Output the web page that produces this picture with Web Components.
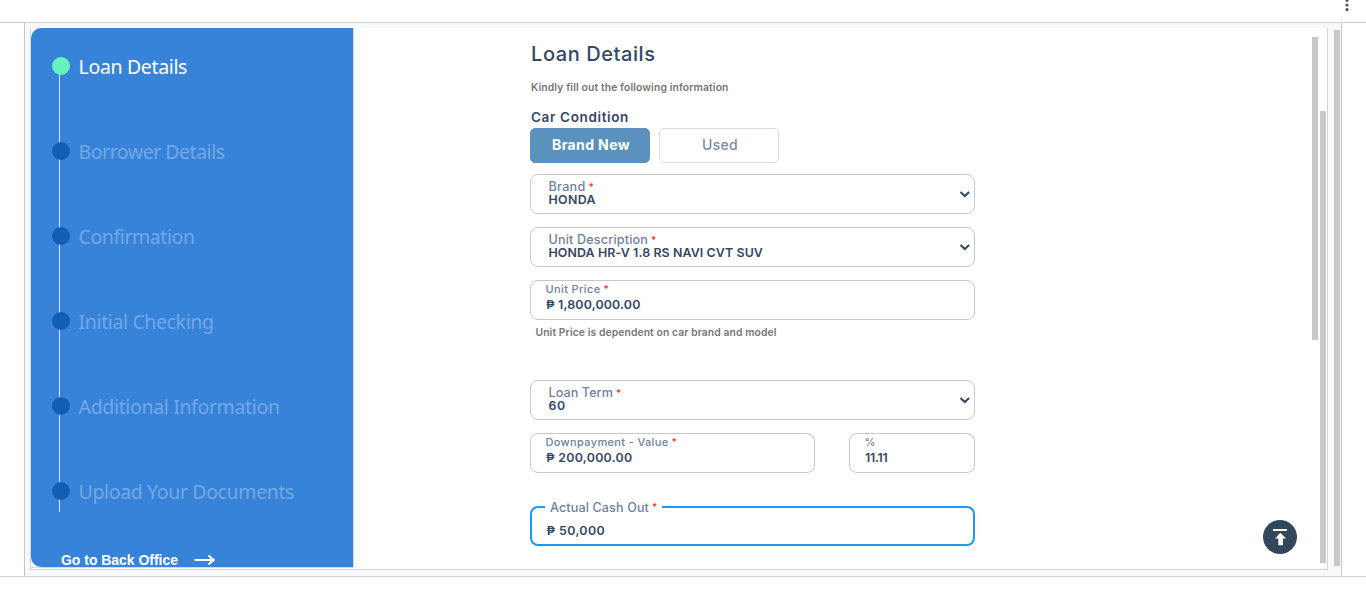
<!DOCTYPE html>
<html lang="en">
<head>
<meta charset="utf-8">
<title>Loan Details</title>
<style>
html,body{margin:0;height:589px;overflow:hidden;background:#fff}
body{font-family:Inter,"Liberation Sans",sans-serif;color:#344767}
</style>
</head>
<body>
<loan-app></loan-app>
<script>
const define = (name, html, setup) => {
  const t = document.createElement('template');
  t.innerHTML = html;
  customElements.define(name, class extends HTMLElement {
    connectedCallback() {
      if (this.shadowRoot) return;
      const root = this.attachShadow({mode: 'open'});
      root.append(t.content.cloneNode(true));
      if (setup) setup(this, root);
    }
  });
};

// One line of text tracked to a given advance width.
define('tracked-text', `
<style>
:host{display:block;flex:none;white-space:nowrap}
span{display:inline-block;line-height:inherit;vertical-align:top}
</style><span><slot></slot></span>`, (el, root) => {
  const s = root.querySelector('span');
  const target = +el.getAttribute('w');
  const n = el.textContent.length;
  const natural = s.getBoundingClientRect().width;
  if (target && n) s.style.letterSpacing = ((target - natural) / n).toFixed(3) + 'px';
});

define('progress-step', `
<style>
:host{display:flex;height:85px;position:relative;color:#73a7e5;font:19.5px/28px "Noto Sans","Open Sans",sans-serif}
i{flex:none;width:18px;height:18px;border-radius:50%;background:#135eb5;margin-right:8px;z-index:1}
:host([active]){color:#fff}
:host([active]) i{background:#66f2be}
:host::before{content:"";position:absolute;left:7px;top:9px;width:1px;height:85px;background:#dbe8f8}
:host([last])::before{height:21px}
tracked-text{margin:-4px 0 0 .6px}
</style><i></i><tracked-text></tracked-text>`, (el, root) => {
  const t = root.querySelector('tracked-text');
  const n = document.createElement('tracked-text');
  n.setAttribute('w', el.getAttribute('w'));
  n.textContent = el.getAttribute('label');
  t.replaceWith(n);
});

define('side-panel', `
<style>
:host{display:flex;flex-direction:column;box-sizing:border-box;flex:none;width:322px;height:539px;background:#3883da;border-radius:10px 0 0 10px;padding:29px 0 0 21px;overflow:hidden}
nav{height:493px;flex:none}
.back{display:flex;align-items:center;height:20px;padding-left:9px;color:#fff;font:bold 14px/20px "Liberation Sans",sans-serif}
svg{margin-left:15.5px}
</style>
<nav>
<progress-step active label="Loan Details" w="108.5"></progress-step>
<progress-step label="Borrower Details" w="146"></progress-step>
<progress-step label="Confirmation" w="116"></progress-step>
<progress-step label="Initial Checking" w="135"></progress-step>
<progress-step label="Additional Information" w="201"></progress-step>
<progress-step last label="Upload Your Documents" w="215.5"></progress-step>
</nav>
<div class="back"><tracked-text w="117">Go to Back Office</tracked-text>
<svg width="21" height="12" viewBox="0 0 21 12" fill="none" stroke="#fff" stroke-width="2.2"><path d="M.5 6H19M14.5 1.5L19.5 6l-5 4.5"/></svg></div>`);

define('choice-button', `
<style>
:host{display:flex;justify-content:center;box-sizing:border-box;width:120px;height:35px;padding:7px 0 0 2px;border:1px solid #dcdcdc;border-radius:5px;font-size:14px;line-height:18px;font-weight:500;color:#7b8ba5}
:host([selected]){background:#5a92bd;border-color:#5a92bd;color:#fff;font-weight:700}
</style><slot></slot>`);

define('form-field', `
<style>
:host{display:flex;position:relative;box-sizing:border-box;width:445px;height:40px;border:1px solid #c8c8c8;border-radius:8px;background:#fff}
.text{display:flex;flex-direction:column}
.label{display:flex;color:#6f819d;font-size:11px;line-height:12px;font-weight:550;margin:2px 0 0 14.5px}
.value{font-size:12.4px;line-height:14px;font-weight:600;margin:3px 0 0 15px;color:#344767}
b{color:#f44336;font-weight:700;font-size:9.5px;line-height:11px;margin-left:3px}
svg{display:none;margin:16px 4px 0 auto}
:host([kind=select]) .label{font-size:12.6px;margin:6px 0 0 17.5px}
:host([kind=select]) .value{margin:0 0 0 17.5px}
:host([kind=select]) svg{display:block}
:host([kind=active]){border:2px solid #2196f3}
:host([kind=active]) .label{font-size:12.6px;margin:-7px 0 0 13px;padding:0 5px;background:#fff;line-height:13px}
:host([kind=active]) .value{margin:10px 0 0 14.5px}
:host([optional]) b{display:none}
</style>
<div class="text"><div class="label"><slot name="label"></slot><b>*</b></div><div class="value"><slot></slot></div></div>
<svg width="11" height="8" viewBox="0 0 11 8" fill="none" stroke="#34496b" stroke-width="2.1"><path d="M1.5 1.1l4.3 4L10.1 1.1"/></svg>`);

define('loan-form', `
<style>
:host{display:block;width:445px;padding:12px 0 0 176px}
h1{margin:0 0 0 1px;font-size:20px;line-height:28px;font-weight:500;height:40px}
p{margin:0 0 0 1px;color:#767676;font-size:10.3px;line-height:14px;font-weight:600}
.sub{height:27px}
h2{margin:0 0 0 1px;font-size:13.5px;line-height:20px;font-weight:600;height:21px}
.choices,.pair{display:flex;gap:9px}
.pair{gap:34px}
.pair form-field:first-child{width:285px}
.pair form-field:last-child{width:126px}
form-field{margin-bottom:13px}
.help{height:47px;padding-left:4.5px;margin-top:-8px;padding-top:0}
.choices{margin-bottom:11px}
</style>
<h1><tracked-text w="124.5">Loan Details</tracked-text></h1>
<p class="sub"><tracked-text w="197.5">Kindly fill out the following information</tracked-text></p>
<h2><tracked-text w="98">Car Condition</tracked-text></h2>
<div class="choices"><choice-button selected><tracked-text w="78">Brand New</tracked-text></choice-button><choice-button><tracked-text w="36">Used</tracked-text></choice-button></div>
<form-field kind="select"><tracked-text slot="label" w="37">Brand</tracked-text><tracked-text w="47.5">HONDA</tracked-text></form-field>
<form-field kind="select"><tracked-text slot="label" w="99.5">Unit Description</tracked-text><tracked-text w="214.5">HONDA HR-V 1.8 RS NAVI CVT SUV</tracked-text></form-field>
<form-field><tracked-text slot="label" w="55">Unit Price</tracked-text><tracked-text w="94.5">₱ 1,800,000.00</tracked-text></form-field>
<p class="help"><tracked-text w="241">Unit Price is dependent on car brand and model</tracked-text></p>
<div style="height:8px"></div>
<form-field kind="select"><tracked-text slot="label" w="64.5">Loan Term</tracked-text><tracked-text w="17.5">60</tracked-text></form-field>
<div class="pair"><form-field><tracked-text slot="label" w="123">Downpayment - Value</tracked-text><tracked-text w="86.5">₱ 200,000.00</tracked-text></form-field>
<form-field optional><tracked-text slot="label" w="10">%</tracked-text><tracked-text w="22.5">11.11</tracked-text></form-field></div>
<div style="height:20px"></div>
<form-field kind="active"><tracked-text slot="label" w="99">Actual Cash Out</tracked-text><tracked-text w="58.5">₱ 50,000</tracked-text></form-field>`);

define('scroll-thumb', `<style>:host{display:block;width:6px;background:#c8c8c8;flex:none}</style>`);

define('loan-app', `
<style>
:host{display:block;height:589px}
header{height:22px;border-bottom:1px solid #cfd0d2;display:flex;justify-content:flex-end;box-sizing:content-box}
header svg{margin-right:16px}
.outer{box-sizing:border-box;height:553px;margin-left:24px;width:1318px;border:solid #c5c6c7;border-width:0 1px;background:#f8f9fb;display:flex;padding:5px 1px 0 5px}
.line{height:1px;background:#d2d3d4}
.inner{box-sizing:border-box;width:1298px;height:542px;border:solid #d3d4d6;border-width:0 1px 1px;background:#fff;display:flex;flex:none}
.side{width:322px;height:539px;border:solid #d3dbe6;border-width:0 1px 1px 0;flex:none}
loan-form{flex:none}
.bars{display:flex;margin-left:auto;gap:2px;padding-right:1px}
.top{position:absolute;left:1263px;top:520px}
</style>
<header><svg width="6" height="14" viewBox="0 0 6 14" fill="#555"><circle cx="3" cy=".3" r="1.6"/><circle cx="3" cy="5" r="1.6"/><circle cx="3" cy="9.7" r="1.6"/></svg></header>
<div class="outer">
<div class="inner"><div class="side"><side-panel></side-panel></div>
<loan-form></loan-form>
<div class="bars"><scroll-thumb style="height:303px;margin-top:9px"></scroll-thumb><scroll-thumb style="height:452px;margin-top:83px"></scroll-thumb></div></div>
<scroll-thumb style="height:536px;margin:2px 0 0 6px"></scroll-thumb>
</div>
<div class="line"></div>
<svg class="top" width="34" height="34" viewBox="0 0 34 34"><circle cx="17" cy="17" r="17" fill="#33475b"/><path fill="#fff" d="M10 9h14v2H10zM17.3 12.8l5.8 5.8h-3.2v6.6h-4.6v-6.6h-3.2z"/></svg>`);
</script>
</body>
</html>
